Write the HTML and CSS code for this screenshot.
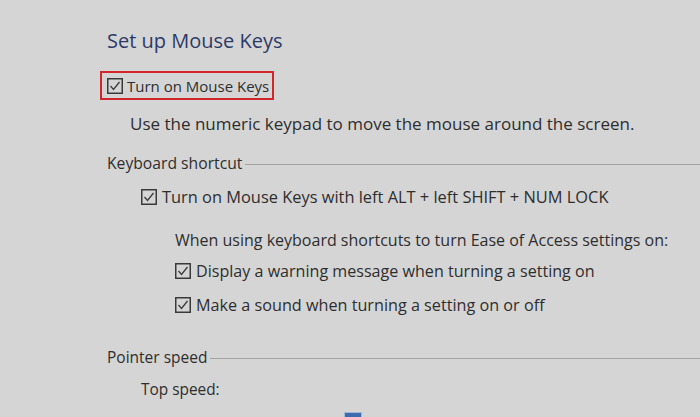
FILE: index.html
```html
<!DOCTYPE html>
<html>
<head>
<meta charset="utf-8">
<link rel="stylesheet" href="styles.css">
</head>
<body>
<div class="page">
  <h1 class="title">Set up Mouse Keys</h1>
  <div class="main-check">
    <svg class="cb" viewBox="0 0 16 16"><rect x="0.75" y="0.75" width="14.5" height="14.5"/><polyline points="3.5,8 6.5,11.5 12.5,4"/></svg>
    <span>Turn on Mouse Keys</span>
  </div>
  <p class="desc">Use the numeric keypad to move the mouse around the screen.</p>

  <div class="legend l-keyboard"><span>Keyboard shortcut</span><div class="rule"></div></div>
  <div class="row indent1">
    <svg class="cb" viewBox="0 0 16 16"><rect x="0.75" y="0.75" width="14.5" height="14.5"/><polyline points="3.5,8 6.5,11.5 12.5,4"/></svg>
    <span>Turn on Mouse Keys with left ALT + left SHIFT + NUM LOCK</span>
  </div>
  <p class="note">When using keyboard shortcuts to turn Ease of Access settings on:</p>
  <div class="row indent2 r-display">
    <svg class="cb" viewBox="0 0 16 16"><rect x="0.75" y="0.75" width="14.5" height="14.5"/><polyline points="3.5,8 6.5,11.5 12.5,4"/></svg>
    <span>Display a warning message when turning a setting on</span>
  </div>
  <div class="row indent2 r-sound">
    <svg class="cb" viewBox="0 0 16 16"><rect x="0.75" y="0.75" width="14.5" height="14.5"/><polyline points="3.5,8 6.5,11.5 12.5,4"/></svg>
    <span>Make a sound when turning a setting on or off</span>
  </div>

  <div class="legend l-pointer"><span>Pointer speed</span><div class="rule"></div></div>
  <p class="label">Top speed:</p>
  <div class="thumb"></div>
</div>
</body>
</html>
```

FILE: styles.css
```css
html, body {
  margin: 0;
  padding: 0;
  background: #d5d5d5;
  overflow: hidden;
}
body {
  width: 700px;
  height: 417px;
  font-family: "Open Sans", "Noto Sans", sans-serif;
  font-size: 15px;
  color: #2e2e2e;
}
.page {
  padding-left: 107px;
  padding-top: 28px;
}
.title {
  margin: 0;
  font-size: 20px;
  line-height: 26px;
  font-weight: 400;
  color: #2c3a68;
}
.main-check {
  display: inline-flex;
  align-items: center;
  margin: 17px 0 0 -7px;
  height: 25px;
  padding: 0 3px 0 5px;
  border: 2px solid #d3262c;
  gap: 4px;
  line-height: 20px;
}
.cb {
  width: 16px;
  height: 16px;
  flex: none;
}
.cb rect {
  fill: none;
  stroke: #3a3a3a;
  stroke-width: 1.5;
}
.cb polyline {
  fill: none;
  stroke: #3a3a3a;
  stroke-width: 1.3;
}
.desc {
  margin: 14px 0 0 23px;
  line-height: 20px;
  font-size: 17px;
}
.legend {
  display: flex;
  align-items: center;
  margin-top: 19px;
  line-height: 20px;
}
.l-keyboard {
  font-size: 15.7px;
}
.legend .rule {
  flex: 1;
  height: 1px;
  background: #a3a3a3;
  margin-left: 3px;
  margin-top: 3px;
}
.row {
  display: flex;
  align-items: center;
  gap: 5px;
  line-height: 20px;
}
.indent1 {
  margin: 14px 0 0 34px;
  font-size: 16.4px;
}
.note {
  margin: 23px 0 0 68px;
  line-height: 20px;
  font-size: 16px;
}
.indent2 {
  margin-left: 68px;
}
.r-display {
  margin-top: 11px;
  font-size: 16.1px;
}
.r-sound {
  margin-top: 14px;
  font-size: 16.2px;
}
.l-pointer {
  margin-top: 32px;
  font-size: 15.5px;
}
.label {
  margin: 13px 0 0 34px;
  line-height: 20px;
  font-size: 15.4px;
}
.thumb {
  margin: 13px 0 0 238px;
  width: 16px;
  height: 12px;
  background: #3b6cae;
  box-shadow: 0 0 0 1px #9fb7d8;
}
```
